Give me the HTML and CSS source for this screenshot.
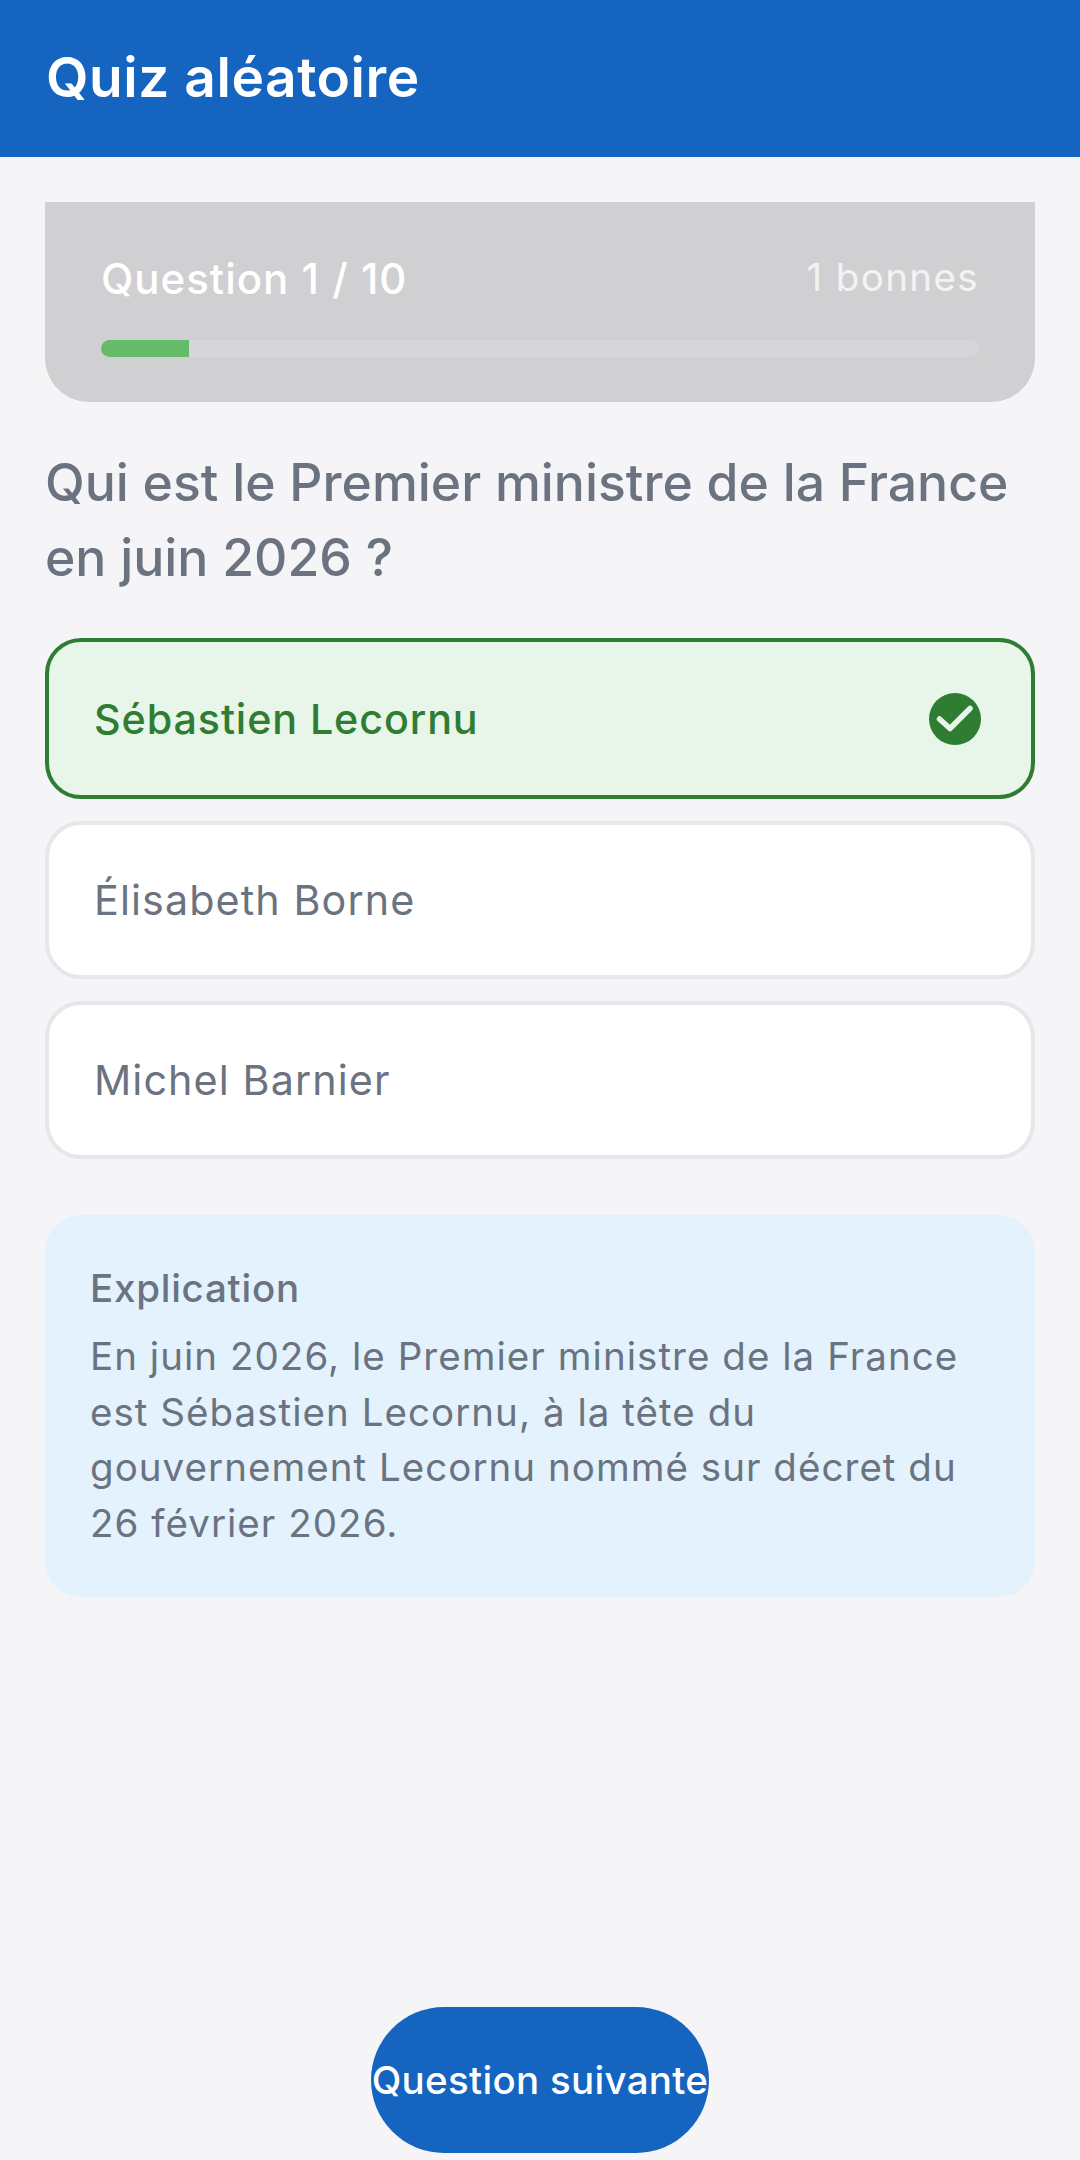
FILE: index.html

```html
<!DOCTYPE html>
<html lang="fr">
<head>
    <meta charset="UTF-8">
    <title>Quiz aléatoire</title>
    <link rel="stylesheet" href="styles.css">
</head>
<body>

<div class="topbar">Quiz aléatoire</div>

<div class="content">
    <div class="progress-card">
        <div class="progress-head">
            <span class="progress-count">Question 1 / 10</span>
            <span class="progress-score">1 bonnes</span>
        </div>
        <div class="progress-track">
            <div class="progress-fill" style="width: 10%"></div>
        </div>
    </div>

    <h1 class="question">Qui est le Premier ministre de la France en juin 2026 ?</h1>

    <div class="answers">
        <div class="answer answer-good">
            <span>Sébastien Lecornu</span>
            <svg class="check" viewBox="0 0 52 52">
                <circle cx="26" cy="26" r="26" fill="#2e7d32"/>
                <path d="M10.500 26 L21 35.500 L41 15.500" fill="none" stroke="#e8f5e9" stroke-width="5.500" stroke-linecap="round" stroke-linejoin="round"/>
            </svg>
        </div>
        <div class="answer">Élisabeth Borne</div>
        <div class="answer">Michel Barnier</div>
    </div>

    <div class="explain">
        <div class="explain-title">Explication</div>
        <p class="explain-text">En juin 2026, le Premier ministre de la France est Sébastien Lecornu, à la tête du gouvernement Lecornu nommé sur décret du 26 février 2026.</p>
    </div>
</div>

<div class="footer">
    <div class="next-btn">Question suivante</div>
</div>

</body>
</html>
```

FILE: styles.css

```css
*{
    margin: 0;
    padding: 0;
    box-sizing: border-box;
}
html, body{
    height: 100%;
}
body{
    display: flex;
    flex-direction: column;
    background: #f5f5f7;
    font-family: Inter, "Liberation Sans", sans-serif;
    color: #6b7280;
    overflow: hidden;
}
.topbar{
    height: 157px;
    flex: none;
    display: flex;
    align-items: center;
    padding: 0 0 4px 46px;
    background: #1565c0;
    color: white;
    font-size: 55px;
    font-weight: 600;
    letter-spacing: 0.550px;
}
.content{
    flex: 1;
    padding: 45px 45px 0;
}
.progress-card{
    height: 200px;
    padding: 49px 56px 0;
    background: #d0d0d2;
    border-radius: 0 0 44px 44px;
}
.progress-head{
    display: flex;
    justify-content: space-between;
    align-items: center;
    height: 54px;
    color: white;
}
.progress-count{
    font-size: 42px;
    font-weight: 500;
    letter-spacing: 1px;
}
.progress-score{
    margin-bottom: 3px;
    font-size: 38.500px;
    letter-spacing: 1.380px;
    color: #f3f3f4;
}
.progress-track{
    height: 17px;
    margin-top: 35px;
    background: #d6d6d8;
    border-radius: 9px;
    overflow: hidden;
}
.progress-fill{
    height: 100%;
    background: #66bb6a;
}
.question{
    margin-top: 43px;
    font-size: 51.700px;
    line-height: 75px;
    font-weight: 500;
}
.answers{
    display: flex;
    flex-direction: column;
    gap: 22px;
    margin-top: 43px;
}
.answer{
    height: 158px;
    display: flex;
    align-items: center;
    justify-content: space-between;
    padding: 0 50px 0 45px;
    background: white;
    border: 4px solid #e5e7eb;
    border-radius: 36px;
    font-size: 41.250px;
    letter-spacing: 1.100px;
}
.answer-good{
    height: 161px;
    background: #e8f5e9;
    border-color: #2e7d32;
    color: #2e7d32;
    font-weight: 500;
    letter-spacing: 0.900px;
}
.check{
    width: 52px;
    height: 52px;
}
.explain{
    height: 382px;
    margin-top: 56px;
    padding: 50px 45px 0;
    background: #e3f2fd;
    border-radius: 36px;
}
.explain-title{
    font-size: 38.500px;
    font-weight: 500;
    line-height: 46px;
    letter-spacing: 0.750px;
}
.explain-text{
    margin-top: 18px;
    font-size: 38.500px;
    line-height: 55.700px;
    letter-spacing: 1.040px;
}
.footer{
    flex: none;
    display: flex;
    justify-content: center;
    padding-bottom: 7px;
}
.next-btn{
    width: 338px;
    height: 146px;
    display: flex;
    align-items: center;
    justify-content: center;
    background: #1565c0;
    border-radius: 73px;
    color: white;
    font-size: 38.500px;
    font-weight: 500;
    letter-spacing: 0.300px;
    white-space: nowrap;
}
```
